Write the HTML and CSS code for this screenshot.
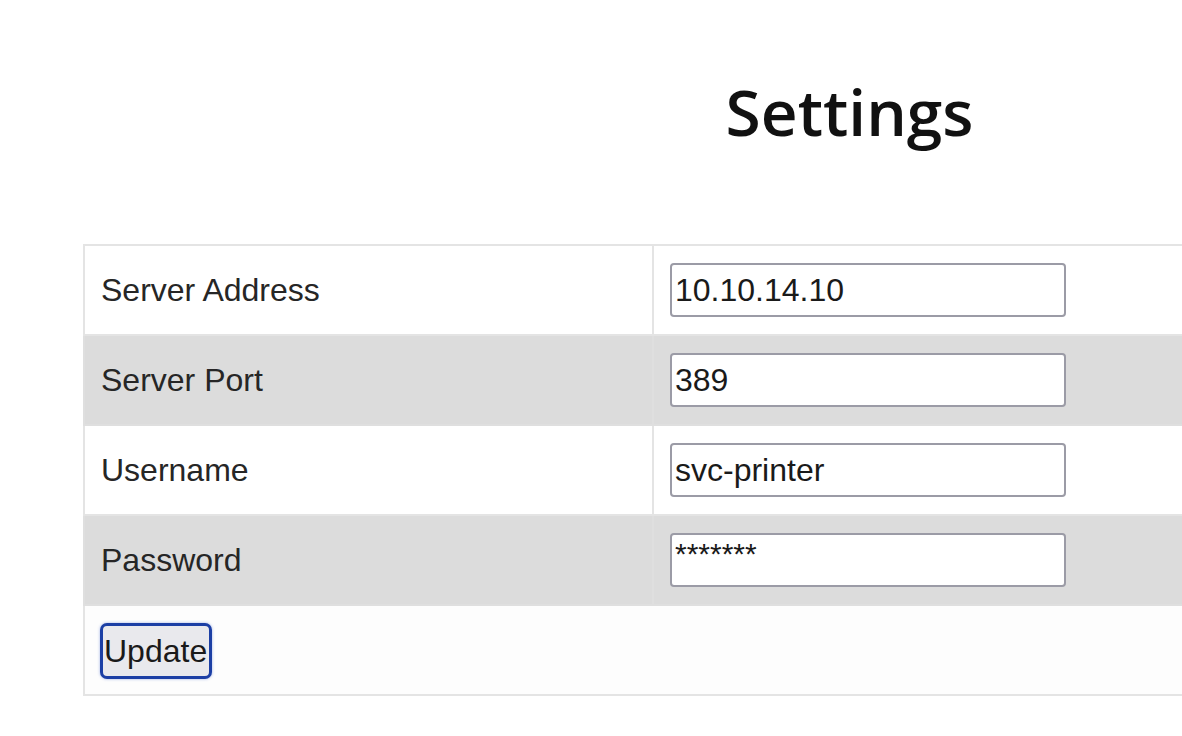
FILE: index.html
```html
<!DOCTYPE html>
<html lang="en">
<head>
<meta charset="utf-8">
<title>Settings</title>
<link rel="stylesheet" href="styles.css">
</head>
<body>
<div class="page">
  <h1 class="title">Settings</h1>
  <form class="settings-form">
    <table class="settings-table">
      <tr class="row">
        <td class="label">Server Address</td>
        <td class="field"><input class="text-input" type="text" value="10.10.14.10"></td>
      </tr>
      <tr class="row row-alt">
        <td class="label">Server Port</td>
        <td class="field"><input class="text-input" type="text" value="389"></td>
      </tr>
      <tr class="row">
        <td class="label">Username</td>
        <td class="field"><input class="text-input" type="text" value="svc-printer"></td>
      </tr>
      <tr class="row row-alt">
        <td class="label">Password</td>
        <td class="field"><input class="text-input pw" type="text" value="*******"></td>
      </tr>
      <tr class="row row-last">
        <td class="actions" colspan="2"><button class="btn" type="button">Update</button></td>
      </tr>
    </table>
  </form>
</div>
</body>
</html>
```
FILE: styles.css
```css
html {
  overflow: hidden;
}
body {
  margin: 0;
  background: #ffffff;
  font-family: "Liberation Sans", Arial, sans-serif;
  color: #222222;
}
.page {
  margin-left: 83px;
  width: 1533px;
}
.title {
  margin: 0;
  padding-top: 67px;
  height: 244px;
  box-sizing: border-box;
  text-align: center;
  font-family: "Open Sans", sans-serif;
  font-weight: 600;
  font-size: 64px;
  line-height: 90px;
  color: #111111;
}
.settings-form {
  margin: 0;
}
.settings-table {
  width: 100%;
  border-collapse: collapse;
  border: 2px solid #e4e4e4;
}
.row td {
  border: 2px solid #e4e4e4;
  padding: 17px 16px;
  font-size: 32px;
  vertical-align: middle;
}
.row-alt td {
  background: #dcdcdc;
  border-color: #dfdfdf;
}
.row-last td {
  background: #fdfdfd;
  padding: 16px 16px 15px 16px;
}
.label {
  width: 535px;
  color: #262626;
}
.text-input {
  display: block;
  box-sizing: border-box;
  width: 396px;
  height: 54px;
  margin: 0;
  padding: 2px 3px;
  border: 2px solid #9b9ba6;
  border-radius: 4px;
  font-family: "Liberation Sans", Arial, sans-serif;
  font-size: 32px;
  color: #1a1a1a;
  background: #ffffff;
}
.pw {
  font-size: 30px;
  padding-top: 0;
  padding-bottom: 12px;
}
.btn {
  display: block;
  box-sizing: border-box;
  height: 56px;
  margin: 1px 0 0 -1px;
  padding: 0 2px 0 1px;
  font-family: "Liberation Sans", Arial, sans-serif;
  font-size: 32px;
  color: #1a1a1a;
  background: #e9e9ed;
  border: 3px solid #1c3fa5;
  border-radius: 7px;
  box-shadow: 0 0 3px rgba(40, 80, 200, 0.45);
}
```
